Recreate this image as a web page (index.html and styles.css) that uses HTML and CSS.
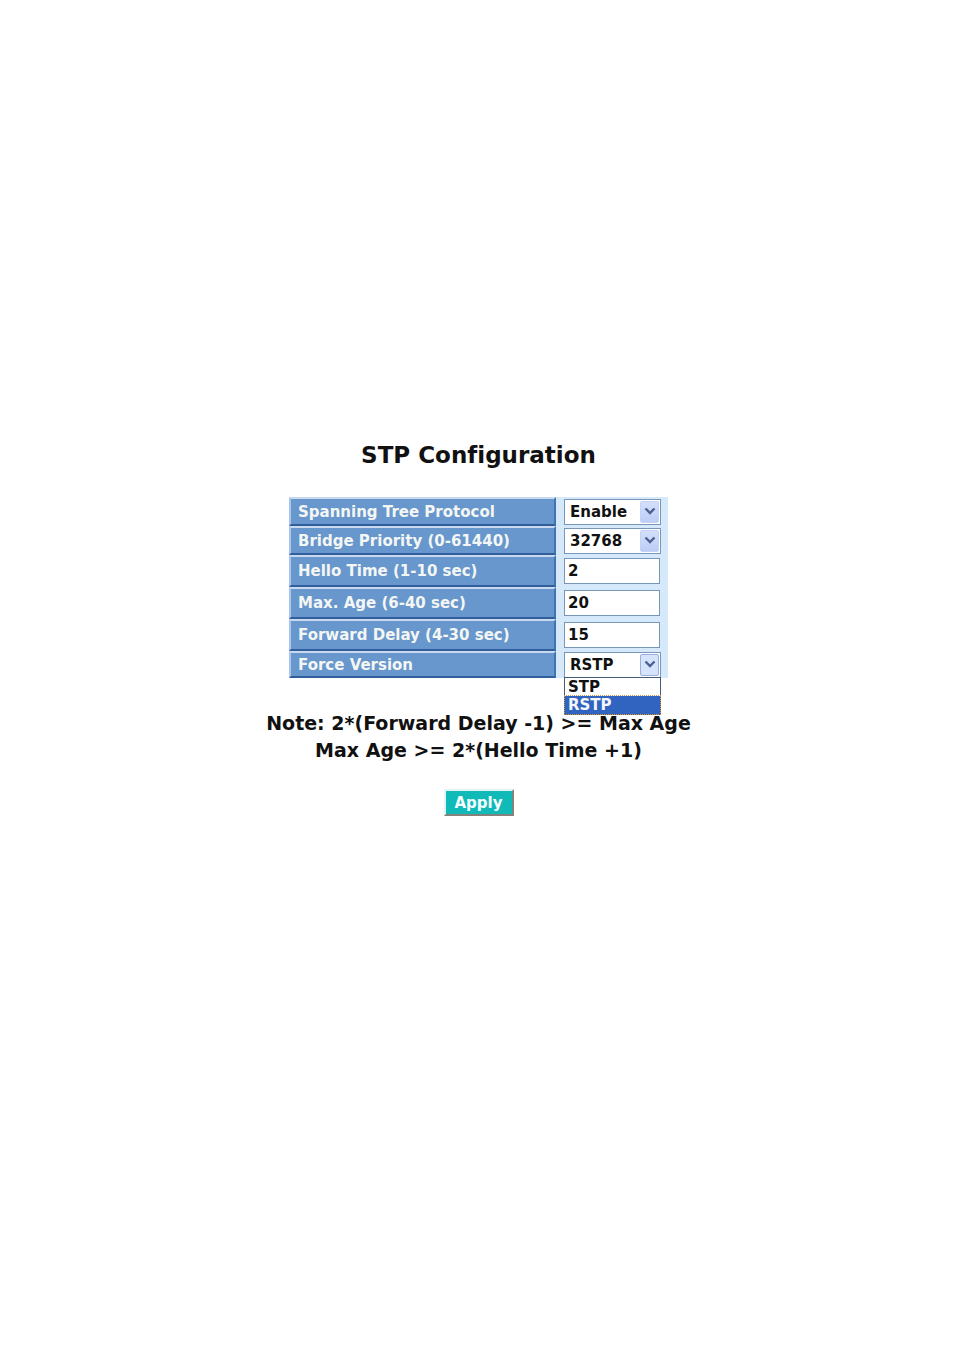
FILE: index.html
```html
<!DOCTYPE html>
<html lang="en">
<head>
<meta charset="utf-8">
<title>STP Configuration</title>
<link rel="stylesheet" href="styles.css">
</head>
<body>
<main class="page">
  <h1 class="title">STP Configuration</h1>
  <form class="form">
    <table class="settings">
      <tr>
        <th scope="row"><label for="stp">Spanning Tree Protocol</label></th>
        <td><div class="picker"><select id="stp"><option>Enable</option><option>Disable</option></select><span class="arrow"><svg viewBox="0 0 12 9"><path d="M1.5 1.5 6 6 10.5 1.5"/></svg></span></div></td>
      </tr>
      <tr>
        <th scope="row"><label for="priority">Bridge Priority (0-61440)</label></th>
        <td><div class="picker"><select id="priority"><option>32768</option></select><span class="arrow"><svg viewBox="0 0 12 9"><path d="M1.5 1.5 6 6 10.5 1.5"/></svg></span></div></td>
      </tr>
      <tr class="tall">
        <th scope="row"><label for="hello">Hello Time (1-10 sec)</label></th>
        <td><input id="hello" type="text" value="2"></td>
      </tr>
      <tr class="tall">
        <th scope="row"><label for="age">Max. Age (6-40 sec)</label></th>
        <td><input id="age" type="text" value="20"></td>
      </tr>
      <tr class="tall">
        <th scope="row"><label for="delay">Forward Delay (4-30 sec)</label></th>
        <td><input id="delay" type="text" value="15"></td>
      </tr>
      <tr class="last">
        <th scope="row"><label for="version">Force Version</label></th>
        <td><div class="picker open"><select id="version"><option>STP</option><option selected>RSTP</option></select><span class="arrow"><svg viewBox="0 0 12 9"><path d="M1.5 1.5 6 6 10.5 1.5"/></svg></span>
          <ul class="menu" role="listbox" aria-label="Force Version"><li role="option">STP</li><li class="active" role="option" aria-selected="true">RSTP</li></ul></div></td>
      </tr>
    </table>
    <p class="note">Note: 2*(Forward Delay -1) &gt;= Max Age<br>Max Age &gt;= 2*(Hello Time +1)</p>
    <button class="apply" type="button">Apply</button>
  </form>
</main>
</body>
</html>
```
FILE: styles.css
```css
* { box-sizing: border-box; }
body {
  margin: 0;
  background: #fff;
  color: #111;
  font-family: Verdana, "DejaVu Sans", sans-serif;
  font-weight: bold;
  font-variant-ligatures: none;
}
.page {
  display: flex;
  flex-direction: column;
  align-items: center;
  padding: 440px 0 40px 3px;
}
.title { margin: 0 0 27px; font-size: 23px; line-height: 30px; }
.form { display: flex; flex-direction: column; align-items: center; }
.settings { width: 379px; border-collapse: separate; border-spacing: 0; background: #d5e9fb; }
.settings th, .settings td { padding: 0; }
.settings tr { height: 29px; }
.settings tr.tall { height: 32px; }
.settings tr.last { height: 27px; }
.settings th {
  width: 267px;
  padding-left: 7px;
  background: #6797cc;
  border-style: solid;
  border-width: 2px;
  border-color: #c9daf0 #4474b0 #315e9b #a9c6e8;
  color: #f4f6f4;
  font-size: 15px;
  line-height: 20px;
  text-align: left;
}
.settings td { padding-left: 8px; }
.picker { position: relative; width: 97px; height: 26px; }
.picker select, .settings input {
  display: block;
  margin: 0;
  border: 1px solid #7896b8;
  border-radius: 0;
  outline: 0;
  background: #fff;
  color: #111;
  font: bold 15px/20px Verdana, "DejaVu Sans", sans-serif;
}
.picker select { appearance: none; width: 100%; height: 26px; padding: 0 0 0 5px; }
.settings input { width: 96px; height: 26px; padding: 0 3px; }
.arrow {
  position: absolute;
  top: 2px;
  right: 2px;
  bottom: 2px;
  width: 19px;
  display: grid;
  place-items: center;
  border: 1px solid #c3d2f6;
  border-radius: 2px;
  background: linear-gradient(#d3dffb, #bccdf7);
  pointer-events: none;
}
.arrow svg { width: 12px; height: 9px; fill: none; stroke: #4b6190; stroke-width: 2.4; }
.open .arrow { border-color: #9daddd; background: #d5e3fd; }
.menu {
  position: absolute;
  z-index: 1;
  top: 25px;
  left: 0;
  width: 100%;
  margin: 0;
  padding: 0;
  border: 1px solid #455d79;
  background: #fff;
  list-style: none;
  font-size: 15px;
  line-height: 18px;
}
.menu li { height: 18px; padding-left: 3px; }
.menu .active { background: #3163c0; color: #f4f6fa; outline: 1px dotted #c79a53; }
.note { margin: 32px 0 0; font-size: 19px; line-height: 27px; text-align: center; }
.apply {
  margin-top: 25px;
  width: 70px;
  height: 27px;
  padding: 0;
  border: 2px solid;
  border-color: #e5f4f2 #85817b #85817b #e5f4f2;
  border-radius: 0;
  background: #10bab9;
  color: #f5ffff;
  font: bold 15px/20px Verdana, "DejaVu Sans", sans-serif;
}
```
